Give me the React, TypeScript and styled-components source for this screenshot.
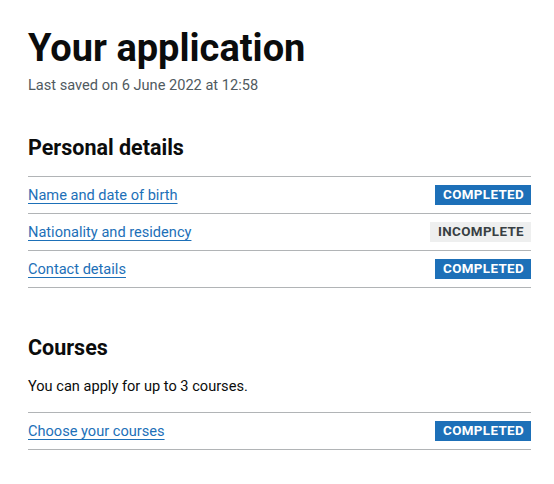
import React from "react";
import styled, { createGlobalStyle } from "styled-components";

const Global = createGlobalStyle`
  html, body { margin: 0; padding: 0; background: #fff; }
  body { font-family: Roboto, Arial, sans-serif; color: #0b0c0c; -webkit-font-smoothing: antialiased; }
`;

const Page = styled.main`
  padding: 27px 23px 20px 28px;
`;

const Title = styled.h1`
  margin: 0;
  font-size: 38px;
  line-height: 42px;
  font-weight: 700;
`;

const Caption = styled.p`
  margin: 5px 0 0;
  font-size: 14.6px;
  line-height: 22px;
  color: #505a5f;
`;

const Section = styled.section<{ $top: number }>`
  margin-top: ${(p) => p.$top}px;
`;

const SectionTitle = styled.h2<{ $space: number }>`
  margin: 0 0 ${(p) => p.$space}px;
  font-size: 21.5px;
  line-height: 28px;
  font-weight: 700;
`;

const Hint = styled.p`
  margin: 0 0 15px;
  font-size: 14.6px;
  line-height: 22px;
`;

const List = styled.ul`
  list-style: none;
  margin: 0;
  padding: 0;
  border-top: 1px solid #b1b4b6;
`;

const Row = styled.li`
  display: flex;
  align-items: center;
  justify-content: space-between;
  height: 36px;
  border-bottom: 1px solid #b1b4b6;
`;

const Link = styled.a`
  font-size: 14.6px;
  color: #1d70b8;
  text-decoration: underline;
  text-underline-offset: 3px;
  text-decoration-thickness: 1px;
`;

const Tag = styled.strong<{ $done: boolean }>`
  display: inline-block;
  height: 20px;
  padding: 0 7px 0 8px;
  font-size: 13.4px;
  line-height: 20px;
  font-weight: 700;
  letter-spacing: 0.35px;
  text-transform: uppercase;
  background: ${(p) => (p.$done ? "#1d70b8" : "#eeefef")};
  color: ${(p) => (p.$done ? "#ffffff" : "#383f43")};
`;

type Item = { label: string; done: boolean };

const personal: Item[] = [
  { label: "Name and date of birth", done: true },
  { label: "Nationality and residency", done: false },
  { label: "Contact details", done: true },
];

const courses: Item[] = [{ label: "Choose your courses", done: true }];

function TaskList({ items }: { items: Item[] }) {
  return (
    <List>
      {items.map((it) => (
        <Row key={it.label}>
          <Link href="#">{it.label}</Link>
          <Tag $done={it.done}>{it.done ? "Completed" : "Incomplete"}</Tag>
        </Row>
      ))}
    </List>
  );
}

export default function App() {
  return (
    <Page>
      <Global />
      <Title>Your application</Title>
      <Caption>Last saved on 6 June 2022 at 12:58</Caption>
      <Section $top={38}>
        <SectionTitle $space={14}>Personal details</SectionTitle>
        <TaskList items={personal} />
      </Section>
      <Section $top={46}>
        <SectionTitle $space={13}>Courses</SectionTitle>
        <Hint>You can apply for up to 3 courses.</Hint>
        <TaskList items={courses} />
      </Section>
    </Page>
  );
}
